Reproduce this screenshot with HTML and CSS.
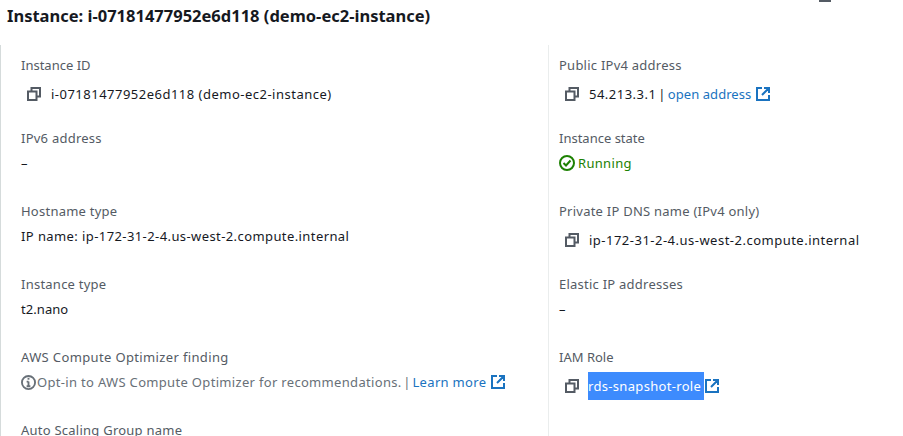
FILE: index.html
```html
<!DOCTYPE html>
<html lang="en">
<head>
<meta charset="utf-8">
<title>Instance details</title>
<link rel="stylesheet" href="styles.css">
</head>
<body>
<svg class="defs" width="0" height="0" aria-hidden="true">
  <symbol id="copy" viewBox="0 0 14 14"><path d="M1 4.500h8.500V13H1zM4.500 4.500V1H13v8.500H9.500" fill="none" stroke="currentColor" stroke-width="2"/></symbol>
  <symbol id="ext" viewBox="0 0 14 14"><path d="M6 1H1v12h12V8M8 1h5v5M13 1 6 8" fill="none" stroke="currentColor" stroke-width="2"/></symbol>
</svg>
<div class="topmark"></div>
<h1 class="title">Instance: i-07181477952e6d118 (demo-ec2-instance)</h1>
<main class="details">
  <section class="col col-left">
    <div class="item"><div class="label">Instance ID</div><div class="value copyrow"><svg class="icon copy"><use href="#copy"/></svg><span class="wide">i-07181477952e6d118 (demo-ec2-instance)</span></div></div>
    <div class="item"><div class="label wide-label">IPv6 address</div><div class="value">–</div></div>
    <div class="item"><div class="label wide-label">Hostname type</div><div class="value wider">IP name: ip-172-31-2-4.us-west-2.compute.internal</div></div>
    <div class="item"><div class="label wide-label">Instance type</div><div class="value tiny">t2.nano</div></div>
    <div class="item"><div class="label widest-label">AWS Compute Optimizer finding</div><div class="value muted"><svg class="icon info" viewBox="0 0 16 16"><circle cx="8" cy="8" r="7" fill="none" stroke="currentColor" stroke-width="2"/><path d="M8 7v5M6 12h4M6 7h2" fill="none" stroke="currentColor" stroke-width="2"/><rect x="7" y="3" width="2" height="2" fill="currentColor"/></svg><span class="mid">Opt-in to AWS Compute Optimizer for recommendations.<span class="sep"> | </span><a class="link">Learn more</a></span><svg class="icon ext"><use href="#ext"/></svg></div></div>
    <div class="item"><div class="label wide-label">Auto Scaling Group name</div></div>
  </section>
  <section class="col col-right">
    <div class="item"><div class="label wide-label">Public IPv4 address</div><div class="value copyrow"><svg class="icon copy"><use href="#copy"/></svg><span class="wide">54.213.3.1<span class="sep"> | </span><a class="link tiny">open address</a></span><svg class="icon ext"><use href="#ext"/></svg></div></div>
    <div class="item"><div class="label">Instance state</div><div class="value running"><svg class="icon ok" viewBox="0 0 16 16"><circle cx="8" cy="8" r="7" fill="none" stroke="currentColor" stroke-width="2"/><path d="m4.500 8 2.500 2.500 4.500-5" fill="none" stroke="currentColor" stroke-width="2"/></svg><span class="mid">Running</span></div></div>
    <div class="item"><div class="label wide-label">Private IP DNS name (IPv4 only)</div><div class="value copyrow"><svg class="icon copy"><use href="#copy"/></svg><span class="wide">ip-172-31-2-4.us-west-2.compute.internal</span></div></div>
    <div class="item"><div class="label wide-label">Elastic IP addresses</div><div class="value">–</div></div>
    <div class="item"><div class="label">IAM Role</div><div class="value copyrow"><svg class="icon copy"><use href="#copy"/></svg><span class="selected mid">rds-snapshot-role</span><svg class="icon ext tight"><use href="#ext"/></svg></div></div>
  </section>
</main>
</body>
</html>
```
FILE: styles.css
```css
* { box-sizing: border-box; }
html, body { margin: 0; height: 436px; overflow: hidden; background: #fff; }
body { font-family: "Noto Sans", sans-serif; font-size: 13px; line-height: 20px; color: #16191f; position: relative; }
.defs { position: absolute; }
.topmark { position: absolute; left: 819px; top: 0; width: 12px; height: 2px; background: #545b64; }
.title { margin: 0; padding: 5px 0 0 7px; height: 45px; font-size: 16.500px; line-height: 22px; font-weight: 700; color: #16191f; }
.details { display: grid; grid-template-columns: 548px 1fr; height: 391px; }
.col { padding-top: 10px; }
.col-left { border-left: 1px solid #d5dbdb; padding-left: 20px; }
.col-right { border-left: 1px solid #eaeded; padding-left: 10px; }
.item { height: 73px; }
.label { color: #545b64; height: 20px; }
.wide-label { letter-spacing: 0.240px; }
.widest-label { letter-spacing: 0.360px; }
.value { margin-top: 5px; display: flex; align-items: center; height: 20px; }
.copyrow { margin-top: 9px; padding-left: 6px; }
.wide { letter-spacing: 0.490px; }
.wider { letter-spacing: 0.410px; }
.mid { letter-spacing: 0.320px; }
.tiny { letter-spacing: 0.060px; }
.sep { word-spacing: -2px; }
.icon { width: 14px; height: 14px; flex: none; }
.copy { color: #545b64; margin-right: 10px; }
.ext { color: #1a73c0; margin-left: 5px; }
.tight { margin-left: 1px; }
.link { color: #1a73c0; }
.muted { color: #687078; }
.info { width: 15px; height: 15px; margin-right: 1px; }
.running { color: #1d8102; }
.ok { width: 16px; height: 16px; margin-right: 3px; }
.selected { background: #3d8bfd; color: #fff; height: 28px; line-height: 28px; margin-left: -1px; padding-right: 3px; }
```
